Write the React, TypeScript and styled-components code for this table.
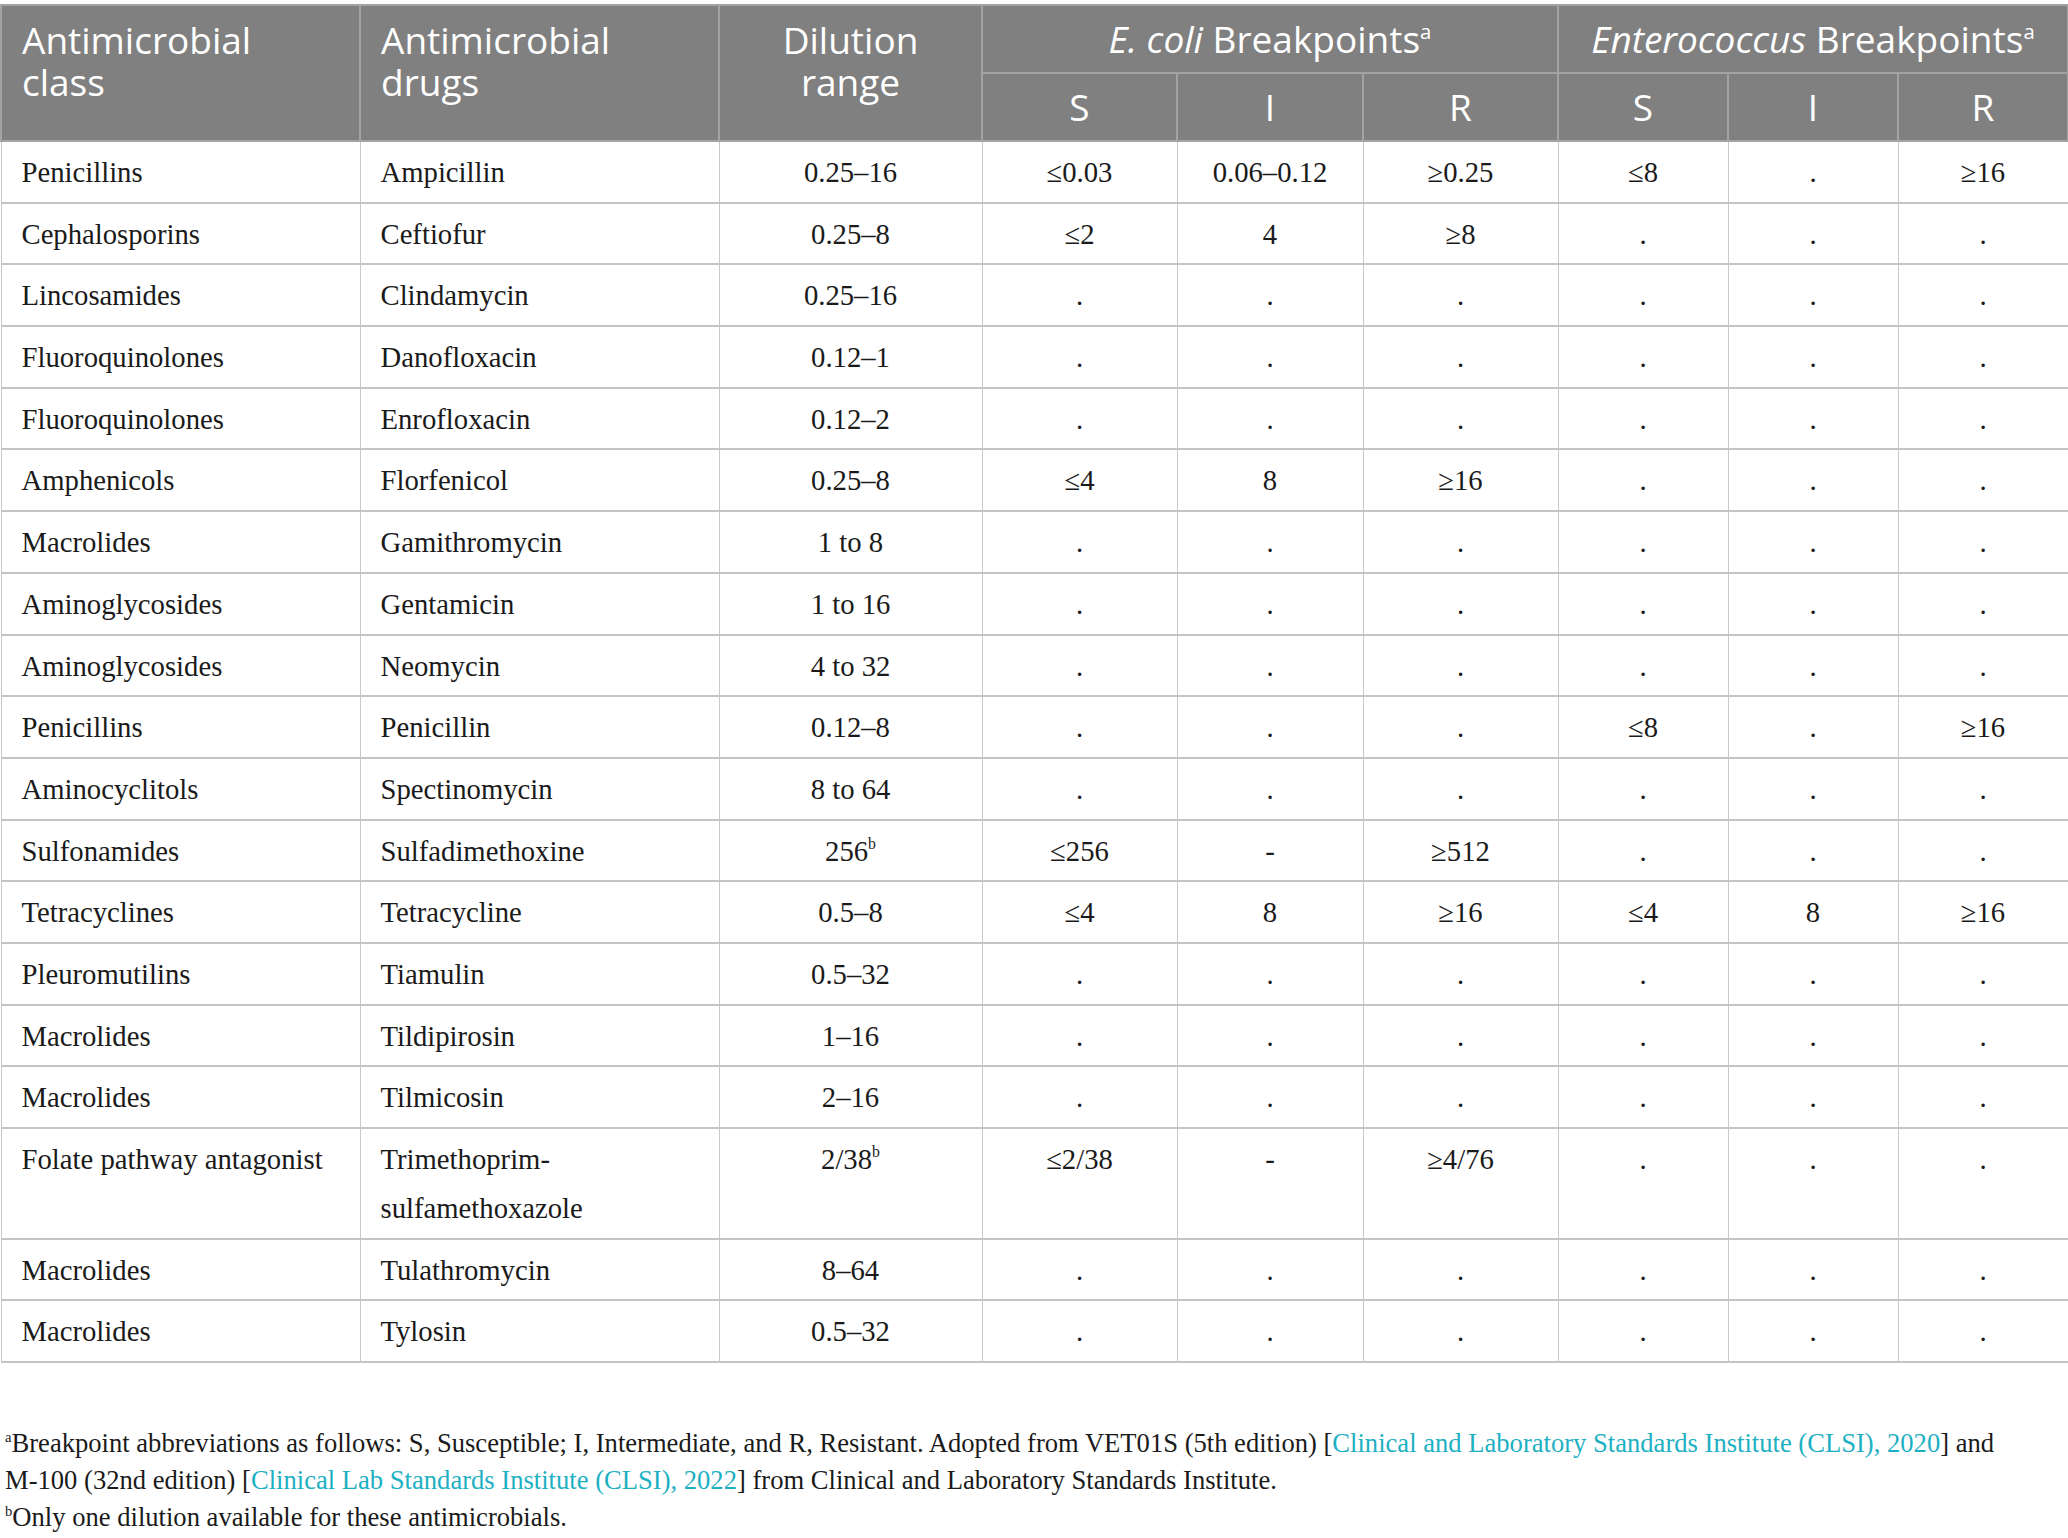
import React from "react";
import styled, { createGlobalStyle } from "styled-components";

const GlobalStyle = createGlobalStyle`
  html, body { margin: 0; padding: 0; background: #ffffff; }
  body { font-family: "Liberation Serif", "Times New Roman", serif; color: #1a1a1a; }
`;

const Page = styled.div`
  width: 2068px;
  padding-top: 4px;
  box-sizing: border-box;
`;

const Table = styled.table`
  width: 2067px;
  border-collapse: collapse;
  table-layout: fixed;
`;

const Th = styled.th<{ $align?: "left" | "center"; $top?: boolean }>`
  background: #808080;
  color: #ffffff;
  font-family: "Open Sans", "Noto Sans", sans-serif;
  font-weight: 400;
  font-size: 37px;
  line-height: 42px;
  text-align: ${(p) => p.$align ?? "center"};
  vertical-align: ${(p) => (p.$top ? "top" : "middle")};
  padding: ${(p) => (p.$top ? "13px 20px 0" : "0 20px")};
  height: 68px;
  border: 2px solid #a3a3a3;
  box-sizing: border-box;

  sup {
    font-size: 0.55em;
    vertical-align: 0.7em;
    line-height: 0;
  }
`;

const HeadLine = styled.span`
  display: block;
  height: 42px;
  white-space: nowrap;
`;

const Td = styled.td<{ $align?: "left" | "center" }>`
  font-family: "Liberation Serif", "Times New Roman", serif;
  font-size: 28.7px;
  line-height: 49px;
  color: #1a1a1a;
  text-align: ${(p) => p.$align ?? "center"};
  vertical-align: top;
  padding: 6px 20px 4.7px;
  border-left: 1px solid #c8c8c8;
  border-right: 1px solid #c8c8c8;
  border-bottom: 2px solid #c4c4c4;

  sup {
    font-size: 0.55em;
    vertical-align: 0.75em;
    line-height: 0;
  }
`;

const Notes = styled.div`
  margin-top: 62px;
  padding-left: 5px;
  font-family: "Liberation Serif", "Times New Roman", serif;
  font-size: 26.6px;
  line-height: 37px;
  color: #1a1a1a;

  sup {
    font-size: 0.55em;
    vertical-align: 0.7em;
    line-height: 0;
  }
`;

const NoteLine = styled.p`
  margin: 0;
  white-space: nowrap;
`;

const Ref = styled.a`
  color: #1db0c2;
  text-decoration: none;
`;

type Cell = string | { t: string; sup: string };

const D = ".";
const dots6: Cell[] = [D, D, D, D, D, D];

const rows: Cell[][] = [
  ["Penicillins", "Ampicillin", "0.25–16", "≤0.03", "0.06–0.12", "≥0.25", "≤8", D, "≥16"],
  ["Cephalosporins", "Ceftiofur", "0.25–8", "≤2", "4", "≥8", D, D, D],
  ["Lincosamides", "Clindamycin", "0.25–16", ...dots6],
  ["Fluoroquinolones", "Danofloxacin", "0.12–1", ...dots6],
  ["Fluoroquinolones", "Enrofloxacin", "0.12–2", ...dots6],
  ["Amphenicols", "Florfenicol", "0.25–8", "≤4", "8", "≥16", D, D, D],
  ["Macrolides", "Gamithromycin", "1 to 8", ...dots6],
  ["Aminoglycosides", "Gentamicin", "1 to 16", ...dots6],
  ["Aminoglycosides", "Neomycin", "4 to 32", ...dots6],
  ["Penicillins", "Penicillin", "0.12–8", D, D, D, "≤8", D, "≥16"],
  ["Aminocyclitols", "Spectinomycin", "8 to 64", ...dots6],
  ["Sulfonamides", "Sulfadimethoxine", { t: "256", sup: "b" }, "≤256", "-", "≥512", D, D, D],
  ["Tetracyclines", "Tetracycline", "0.5–8", "≤4", "8", "≥16", "≤4", "8", "≥16"],
  ["Pleuromutilins", "Tiamulin", "0.5–32", ...dots6],
  ["Macrolides", "Tildipirosin", "1–16", ...dots6],
  ["Macrolides", "Tilmicosin", "2–16", ...dots6],
  ["Folate pathway antagonist", "Trimethoprim-sulfamethoxazole", { t: "2/38", sup: "b" }, "≤2/38", "-", "≥4/76", D, D, D],
  ["Macrolides", "Tulathromycin", "8–64", ...dots6],
  ["Macrolides", "Tylosin", "0.5–32", ...dots6],
];

const widths = [359, 359, 263, 195, 186, 195, 170, 170, 170];

const renderCell = (c: Cell) =>
  typeof c === "string" ? c : (
    <>
      {c.t}
      <sup>{c.sup}</sup>
    </>
  );

export default function App() {
  return (
    <Page>
      <GlobalStyle />
      <Table>
        <colgroup>
          {widths.map((w, i) => (
            <col key={i} style={{ width: w }} />
          ))}
        </colgroup>
        <thead>
          <tr>
            <Th rowSpan={2} $align="left" $top>
              <HeadLine>Antimicrobial</HeadLine>
              <HeadLine>class</HeadLine>
            </Th>
            <Th rowSpan={2} $align="left" $top>
              <HeadLine>Antimicrobial</HeadLine>
              <HeadLine>drugs</HeadLine>
            </Th>
            <Th rowSpan={2} $top>
              <HeadLine>Dilution</HeadLine>
              <HeadLine>range</HeadLine>
            </Th>
            <Th colSpan={3}>
              <i>E. coli</i> Breakpoints<sup>a</sup>
            </Th>
            <Th colSpan={3}>
              <i>Enterococcus</i> Breakpoints<sup>a</sup>
            </Th>
          </tr>
          <tr>
            <Th>S</Th>
            <Th>I</Th>
            <Th>R</Th>
            <Th>S</Th>
            <Th>I</Th>
            <Th>R</Th>
          </tr>
        </thead>
        <tbody>
          {rows.map((r, i) => (
            <tr key={i}>
              {r.map((c, j) => (
                <Td key={j} $align={j < 2 ? "left" : "center"}>
                  {renderCell(c)}
                </Td>
              ))}
            </tr>
          ))}
        </tbody>
      </Table>
      <Notes>
        <NoteLine>
          <sup>a</sup>Breakpoint abbreviations as follows: S, Susceptible; I, Intermediate, and R, Resistant. Adopted from
          VET01S (5th edition) [<Ref href="#">Clinical and Laboratory Standards Institute (CLSI), 2020</Ref>] and
        </NoteLine>
        <NoteLine>
          M-100 (32nd edition) [<Ref href="#">Clinical Lab Standards Institute (CLSI), 2022</Ref>] from Clinical and
          Laboratory Standards Institute.
        </NoteLine>
        <NoteLine>
          <sup>b</sup>Only one dilution available for these antimicrobials.
        </NoteLine>
      </Notes>
    </Page>
  );
}
